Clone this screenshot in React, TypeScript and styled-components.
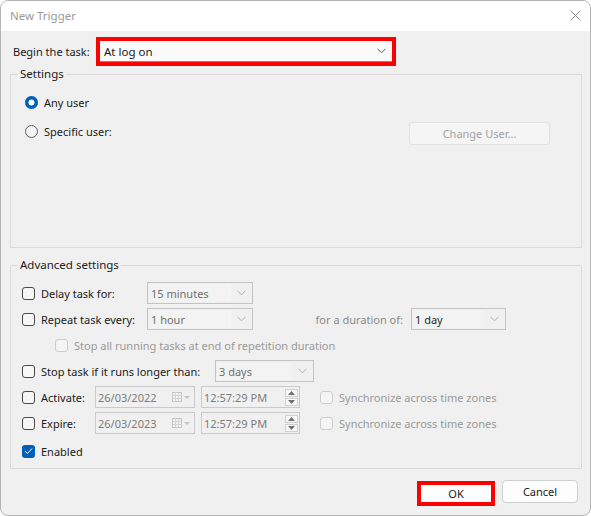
import React from 'react'
import styled, { createGlobalStyle, css } from 'styled-components'

const GlobalStyle = createGlobalStyle`
  html, body {
    margin: 0;
    padding: 0;
    background: #ffffff;
  }
  body {
    font-family: "Noto Sans", "Open Sans", sans-serif;
    font-size: 11px;
    color: #1b1b1b;
  }
  * { box-sizing: border-box; }
`

const Chevron = ({ color = '#8a8a8a' }: { color?: string }) => (
  <svg width="9" height="6" viewBox="0 0 9 6">
    <path d="M0.5 0.8 L4.5 4.8 L8.5 0.8" fill="none" stroke={color} strokeWidth="1" />
  </svg>
)

const CalendarIcon = () => (
  <svg width="20" height="12" viewBox="0 0 20 12">
    <rect x="0.5" y="1.5" width="9" height="9" fill="#f3f3f3" stroke="#c4c4c4" />
    <path d="M0.5 4.5 H9.5 M0.5 7.5 H9.5 M3.5 1.5 V10.5 M6.5 1.5 V10.5" stroke="#d4d4d4" />
    <path d="M12 5 L18 5 L15 8 Z" fill="#c4c4c4" />
  </svg>
)

const CheckMark = () => (
  <svg width="9" height="8" viewBox="0 0 9 8">
    <path d="M1 4.2 L3.4 6.5 L8 1.5" fill="none" stroke="#ffffff" strokeWidth="1" />
  </svg>
)

function Checkbox({ checked, disabled }: { checked?: boolean; disabled?: boolean }) {
  return (
    <S.Box $checked={checked} $disabled={disabled}>
      {checked && <CheckMark />}
    </S.Box>
  )
}

function CheckItem({ label, width, checked, disabled }: { label: string; width?: number; checked?: boolean; disabled?: boolean }) {
  return (
    <S.CheckItem $width={width} $disabled={disabled}>
      <Checkbox checked={checked} disabled={disabled} />
      <span>{label}</span>
    </S.CheckItem>
  )
}

function Combo({ value, width, dark }: { value: string; width: number; dark?: boolean }) {
  return (
    <S.Combo $width={width} $dark={dark}>
      <S.ComboText>{value}</S.ComboText>
      <S.ComboArrow><Chevron color="#b0b0b0" /></S.ComboArrow>
    </S.Combo>
  )
}

function DateField({ value }: { value: string }) {
  return (
    <S.Field $width={100}>
      <span>{value}</span>
      <CalendarIcon />
    </S.Field>
  )
}

function TimeField({ value }: { value: string }) {
  return (
    <S.Field $width={99}>
      <span>{value}</span>
      <S.Spinner>
        <S.SpinBtn>
          <svg width="7" height="4" viewBox="0 0 7 4"><path d="M0 4 L3.5 0 L7 4 Z" fill="#707070" /></svg>
        </S.SpinBtn>
        <S.SpinBtn>
          <svg width="7" height="4" viewBox="0 0 7 4"><path d="M0 0 L3.5 4 L7 0 Z" fill="#707070" /></svg>
        </S.SpinBtn>
      </S.Spinner>
    </S.Field>
  )
}

export default function App() {
  return (
    <>
      <GlobalStyle />
      <S.Window>
        <S.TitleBar>
          <S.Title>New Trigger</S.Title>
          <S.Close>
            <svg width="11" height="11" viewBox="0 0 11 11">
              <path d="M0.5 0.5 L10.5 10.5 M10.5 0.5 L0.5 10.5" stroke="#8c8c8c" strokeWidth="1" />
            </svg>
          </S.Close>
        </S.TitleBar>

        <S.Body>
          <S.BeginRow>
            <S.BeginLabel>Begin the task:</S.BeginLabel>
            <S.Highlight>
              <S.MainSelect>
                <span>At log on</span>
                <Chevron color="#5a5a5a" />
              </S.MainSelect>
            </S.Highlight>
          </S.BeginRow>

          <S.Group>
            <S.Legend>Settings</S.Legend>
            <S.SettingsContent>
              <S.RadioItem>
                <S.Radio $checked />
                <span>Any user</span>
              </S.RadioItem>
              <S.UserRow>
                <S.RadioItem $offset={1}>
                  <S.Radio />
                  <span>Specific user:</span>
                </S.RadioItem>
                <S.ChangeUser>Change User...</S.ChangeUser>
              </S.UserRow>
            </S.SettingsContent>
          </S.Group>

          <S.Group $advanced>
            <S.Legend>Advanced settings</S.Legend>
            <S.AdvancedContent>
              <S.Row>
                <CheckItem label="Delay task for:" width={125} />
                <Combo value="15 minutes" width={106} />
              </S.Row>
              <S.Row>
                <CheckItem label="Repeat task every:" width={125} />
                <Combo value="1 hour" width={106} />
                <S.DurationLabel>for a duration of:</S.DurationLabel>
                <Combo value="1 day" width={95} dark />
              </S.Row>
              <S.Row $indent={33}>
                <CheckItem label="Stop all running tasks at end of repetition duration" disabled />
              </S.Row>
              <S.Row>
                <CheckItem label="Stop task if it runs longer than:" width={193} />
                <Combo value="3 days" width={99} />
              </S.Row>
              <S.Row>
                <CheckItem label="Activate:" width={73} />
                <DateField value="26/03/2022" />
                <TimeField value="12:57:29 PM" />
                <S.SyncSpacer />
                <CheckItem label="Synchronize across time zones" disabled />
              </S.Row>
              <S.Row>
                <CheckItem label="Expire:" width={73} />
                <DateField value="26/03/2023" />
                <TimeField value="12:57:29 PM" />
                <S.SyncSpacer />
                <CheckItem label="Synchronize across time zones" disabled />
              </S.Row>
              <S.Row $top={2}>
                <CheckItem label="Enabled" checked />
              </S.Row>
            </S.AdvancedContent>
          </S.Group>

          <S.Buttons>
            <S.OkButton>OK</S.OkButton>
            <S.Button>Cancel</S.Button>
          </S.Buttons>
        </S.Body>
      </S.Window>
    </>
  )
}

const S = {
  Window: styled.div`
    width: 591px;
    height: 516px;
    border: 1px solid #b4b4b4;
    border-radius: 8px;
    overflow: hidden;
    display: flex;
    flex-direction: column;
    background: #f0f0f0;
  `,

  TitleBar: styled.div`
    height: 30px;
    flex: none;
    background: #ffffff;
    display: flex;
    align-items: center;
    justify-content: space-between;
    padding: 0 9px 0 9px;
  `,

  Title: styled.div`
    color: #9a9a9a;
    font-size: 11.5px;
    margin-top: -1px;
  `,

  Close: styled.div`
    display: flex;
    margin-top: -1px;
  `,

  Body: styled.div`
    flex: 1;
    display: flex;
    flex-direction: column;
    padding: 6px 8px 0 9px;
  `,

  BeginRow: styled.div`
    display: flex;
    align-items: center;
    height: 29px;
  `,

  BeginLabel: styled.span`
    width: 83px;
    margin-left: 3px;
    white-space: nowrap;
  `,

  Highlight: styled.div`
    width: 300px;
    height: 29px;
    border: 4px solid #ff0000;
  `,

  MainSelect: styled.div`
    height: 100%;
    background: #fafafa;
    border-bottom: 1px solid #8a8a8a;
    display: flex;
    align-items: center;
    justify-content: space-between;
    padding: 0 6px 0 4px;
    font-size: 11.5px;
  `,

  Group: styled.fieldset<{ $advanced?: boolean }>`
    margin: ${p => (p.$advanced ? '9px' : '0')} 0 0 0;
    padding: 0;
    min-width: 0;
    border: 1px solid #dadada;
    border-radius: 0;
  `,

  Legend: styled.legend`
    margin-left: 7px;
    padding: 0 2px;
    line-height: 16px;
    font-size: 11.5px;
  `,

  SettingsContent: styled.div`
    height: 165px;
    padding: 12px 31px 0 14px;
    display: flex;
    flex-direction: column;
    gap: 12px;
  `,

  RadioItem: styled.label<{ $offset?: number }>`
    display: flex;
    align-items: center;
    gap: 6px;
    height: 16px;
    margin-top: ${p => p.$offset || 0}px;
  `,

  Radio: styled.span<{ $checked?: boolean }>`
    width: 13px;
    height: 13px;
    border-radius: 50%;
    flex: none;
    ${p =>
      p.$checked
        ? css`
            background: #005fb8;
            box-shadow: inset 0 0 0 3.5px #005fb8, inset 0 0 0 7px #ffffff;
          `
        : css`
            background: #f5f5f5;
            border: 1px solid #5c5c5c;
          `}
  `,

  UserRow: styled.div`
    display: flex;
    align-items: flex-start;
    justify-content: space-between;
  `,

  ChangeUser: styled.div`
    width: 141px;
    height: 23px;
    border: 1px solid #e2e2e2;
    border-radius: 3px;
    background: #f5f5f5;
    color: #a3a3a3;
    display: flex;
    align-items: center;
    justify-content: center;
  `,

  AdvancedContent: styled.div`
    padding: 9px 11px 6px 11px;
    display: flex;
    flex-direction: column;
    gap: 4px;
  `,

  Row: styled.div<{ $indent?: number; $top?: number }>`
    display: flex;
    align-items: center;
    height: 22px;
    padding-left: ${p => p.$indent || 0}px;
    margin-top: ${p => p.$top || 0}px;
  `,

  CheckItem: styled.label<{ $width?: number; $disabled?: boolean }>`
    display: flex;
    align-items: center;
    gap: 6px;
    flex: none;
    width: ${p => (p.$width ? `${p.$width}px` : 'auto')};
    color: ${p => (p.$disabled ? '#9a9a9a' : '#1b1b1b')};
    white-space: nowrap;
  `,

  Box: styled.span<{ $checked?: boolean; $disabled?: boolean }>`
    width: 13px;
    height: 13px;
    flex: none;
    border-radius: 3px;
    display: flex;
    align-items: center;
    justify-content: center;
    ${p =>
      p.$checked
        ? css`
            background: #005fb8;
          `
        : p.$disabled
        ? css`
            background: #f5f5f5;
            border: 1px solid #cdcdcd;
          `
        : css`
            background: #f6f6f6;
            border: 1px solid #4a4a4a;
          `}
  `,

  Combo: styled.div<{ $width: number; $dark?: boolean }>`
    width: ${p => p.$width}px;
    height: 22px;
    border: 1px solid #c3c3c3;
    background: #f0f0f0;
    display: flex;
    align-items: stretch;
    color: ${p => (p.$dark ? '#2a2a2a' : '#707070')};
    padding: 1px;
  `,

  ComboText: styled.span`
    flex: 1;
    background: #f3f3f3;
    display: flex;
    align-items: center;
    padding-left: 2px;
  `,

  ComboArrow: styled.span`
    width: 20px;
    display: flex;
    align-items: center;
    justify-content: center;
  `,

  DurationLabel: styled.span`
    width: 150px;
    text-align: right;
    margin-right: 8px;
    color: #8a8a8a;
  `,

  Field: styled.div<{ $width: number }>`
    width: ${p => p.$width}px;
    height: 22px;
    border: 1px solid #cacaca;
    margin-right: 6px;
    display: flex;
    align-items: center;
    justify-content: space-between;
    padding: 0 2px 0 2px;
    color: #7c7c7c;
  `,

  Spinner: styled.div`
    display: flex;
    flex-direction: column;
    gap: 1px;
    margin-right: -1px;
  `,

  SpinBtn: styled.span`
    width: 13px;
    height: 8px;
    border: 1px solid #d0d0d0;
    background: #f7f7f7;
    display: flex;
    align-items: center;
    justify-content: center;
  `,

  SyncSpacer: styled.span`
    width: 14px;
  `,

  Buttons: styled.div`
    display: flex;
    align-items: flex-start;
    justify-content: flex-end;
    gap: 7px;
    margin-top: 11px;
    padding-right: 4px;
  `,

  Button: styled.div`
    width: 76px;
    height: 23px;
    border: 1px solid #d0d0d0;
    border-radius: 4px;
    background: #fdfdfd;
    display: flex;
    align-items: center;
    justify-content: center;
  `,

  OkButton: styled.div`
    width: 78px;
    height: 25px;
    margin-top: 1px;
    border: 4px solid #ff0000;
    background: #fdfdfd;
    display: flex;
    align-items: center;
    justify-content: center;
  `
}
